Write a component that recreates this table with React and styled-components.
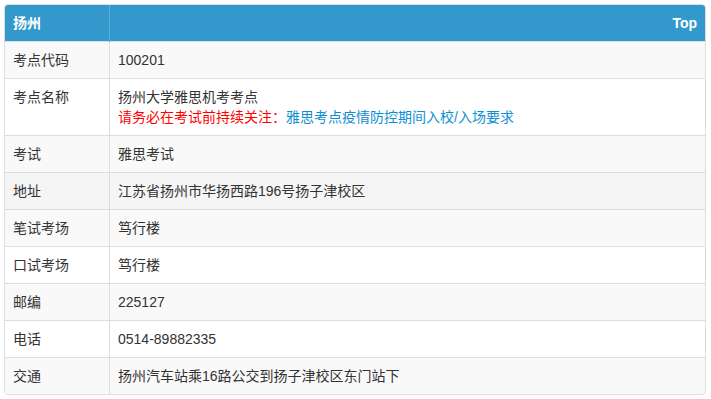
import React from 'react';
import styled, { createGlobalStyle } from 'styled-components';

const GlobalStyle = createGlobalStyle`
  body {
    margin: 0;
    padding: 4px 5px 5px 4px;
    background: #fff;
    font-family: "Liberation Sans", Arial, "Noto Sans CJK SC", sans-serif;
    font-size: 14px;
    line-height: 20px;
    color: #333;
  }
`;

const Panel = styled.div`
  border: 1px solid #ddd;
  border-radius: 4px;
  overflow: hidden;
`;

const Table = styled.table`
  width: 100%;
  border-collapse: collapse;
  border-spacing: 0;
`;

const HeadCell = styled.th`
  background: #3399cc;
  color: #fff;
  font-weight: bold;
  text-align: ${(props) => (props.right ? 'right' : 'left')};
  padding: 8px;
  height: 20px;
  border-left: ${(props) => (props.right ? '1px solid #5aaed8' : 'none')};
`;

const Row = styled.tr`
  background: ${(props) => (props.hover ? '#f5f5f5' : props.odd ? '#f9f9f9' : '#fff')};
  border-top: 1px solid #ddd;
`;

const Label = styled.td`
  width: 88px;
  padding: 8px;
  vertical-align: top;
  border-right: 1px solid #ddd;
`;

const Value = styled.td`
  padding: 8px;
  vertical-align: top;
`;

const Warn = styled.span`
  color: #ff0000;
`;

const Link = styled.a`
  color: #0e8fd2;
  text-decoration: none;
`;

const rows = [
  ['考点代码', '100201'],
  ['考点名称', null],
  ['考试', '雅思考试'],
  ['地址', '江苏省扬州市华扬西路196号扬子津校区'],
  ['笔试考场', '笃行楼'],
  ['口试考场', '笃行楼'],
  ['邮编', '225127'],
  ['电话', '0514-89882335'],
  ['交通', '扬州汽车站乘16路公交到扬子津校区东门站下'],
];

const App = () => {
  return (
    <>
      <GlobalStyle />
      <Panel>
        <Table>
          <thead>
            <tr>
              <HeadCell>扬州</HeadCell>
              <HeadCell right>Top</HeadCell>
            </tr>
          </thead>
          <tbody>
            {rows.map(([label, value], i) => (
              <Row key={label} odd={i % 2 === 0} hover={i === 3}>
                <Label>{label}</Label>
                <Value>
                  {value === null ? (
                    <>
                      扬州大学雅思机考考点
                      <br />
                      <Warn>请务必在考试前持续关注：</Warn>
                      <Link href="#">雅思考点疫情防控期间入校/入场要求</Link>
                    </>
                  ) : (
                    value
                  )}
                </Value>
              </Row>
            ))}
          </tbody>
        </Table>
      </Panel>
    </>
  );
};

export default App;
